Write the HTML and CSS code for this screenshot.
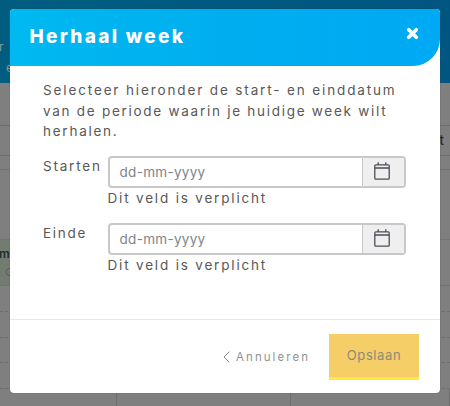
FILE: index.html
```html
<!DOCTYPE html>
<html lang="nl">
<head>
<meta charset="utf-8">
<title>Herhaal week</title>
<link rel="stylesheet" href="styles.css">
</head>
<body>
<div class="page">
  <div class="hero"><span class="hero-title">r</span><span class="hero-link">e</span></div>
  <div class="row toolbar"></div>
  <div class="row days"><span>t</span></div>
  <div class="row strip"></div>
  <div class="row slot"></div>
  <div class="row event"><span class="event-name">m</span><span class="event-icon">○</span></div>
  <div class="row dashed"></div>
  <div class="row dashed"></div>
  <div class="row dashed"></div>
  <div class="row dashed"></div>
  <div class="columns"><i></i><i></i><i></i></div>
</div>
<div class="overlay">
  <section class="modal">
    <header class="modal-header">
      <h1>Herhaal week</h1>
      <svg class="close" viewBox="0 0 12 12"><path d="M2.5 2.5 9.5 9.5M9.5 2.5 2.5 9.5"/></svg>
    </header>
    <div class="modal-body">
      <p class="intro"><span class="line l1">Selecteer hieronder de start- en einddatum</span> <span class="line l2">van de periode waarin je huidige week wilt</span> <span class="line l3">herhalen.</span></p>
      <div class="field">
        <label class="starten">Starten</label>
        <div class="control">
          <div class="input"><span class="placeholder">dd-mm-yyyy</span>
            <span class="addon"><svg viewBox="0 0 16 18"><path d="M.8 3.8a1 1 0 0 1 1-1h12.4a1 1 0 0 1 1 1v12.4a1 1 0 0 1-1 1H1.8a1 1 0 0 1-1-1zM.8 6h14.4M4.2 .3v2.5M11.8 .3v2.5"/></svg></span>
          </div>
          <div class="error">Dit veld is verplicht</div>
        </div>
      </div>
      <div class="field">
        <label class="einde">Einde</label>
        <div class="control">
          <div class="input"><span class="placeholder">dd-mm-yyyy</span>
            <span class="addon"><svg viewBox="0 0 16 18"><path d="M.8 3.8a1 1 0 0 1 1-1h12.4a1 1 0 0 1 1 1v12.4a1 1 0 0 1-1 1H1.8a1 1 0 0 1-1-1zM.8 6h14.4M4.2 .3v2.5M11.8 .3v2.5"/></svg></span>
          </div>
          <div class="error">Dit veld is verplicht</div>
        </div>
      </div>
    </div>
    <footer class="modal-footer">
      <span class="cancel"><svg viewBox="0 0 7 12"><path d="M6.3 .7 1 6l5.3 5.3"/></svg><span>Annuleren</span></span>
      <span class="save">Opslaan</span>
    </footer>
  </section>
</div>
</body>
</html>
```
FILE: styles.css
```css
* { box-sizing: border-box; }
body { margin: 0; font-family: Inter, "Liberation Sans", sans-serif; color: #585858; }
svg { display: block; fill: none; }

.page { position: relative; width: 450px; height: 406px; overflow: hidden; background: #7f7f7f; }
.hero { height: 83px; background: linear-gradient(90deg, #005d80, #005680); color: #8c999e; display: flex; flex-direction: column; padding-top: 40px; font-size: 12px; line-height: 14px; }
.hero-title { margin-left: -1px; }
.hero-link { margin: 7px 0 0 6px; }
.row { border-bottom: 1px solid #6d6d6d; }
.toolbar { height: 43px; }
.days { height: 30px; padding: 7px 6px 0 0; text-align: right; font-size: 13px; line-height: 14px; font-weight: 500; color: #262b30; }
.strip { height: 14px; border-color: #747474; }
.slot { height: 70px; border-color: #747474; }
.event { height: 46px; border-color: #747474; background: linear-gradient(90deg, #737c70 20px, transparent 20px); display: flex; flex-direction: column; padding-top: 6px; line-height: 16px; }
.event-name { font-size: 12px; font-weight: 600; color: #26292c; margin-left: -1px; }
.event-icon { font-size: 10px; line-height: 20px; margin-left: 5px; }
.dashed { height: 25.8px; border-bottom: 1px dashed #6f6f6f; }
.columns { position: absolute; inset: 389px 0 0; display: grid; grid-template-columns: 117px 174px 1fr; }
.columns i { border-right: 1px solid #6f6f6f; }

.overlay { position: absolute; top: 0; left: 0; width: 450px; height: 406px; padding: 9px 10px 13px 9.5px; }
.modal { height: 384px; background: #fff; border-radius: 4px; display: flex; flex-direction: column; overflow: hidden; box-shadow: 0 0 1px #444; }
.modal-header { height: 56.5px; flex: none; display: flex; justify-content: space-between; align-items: flex-start; padding: 16px 21px 0 20px; color: #fff; background: linear-gradient(90deg, #00b9f1, #00aeef 50%, #00a9f4); border-bottom-right-radius: 27px; }
h1 { margin: 0; font-size: 19px; line-height: 23px; font-weight: 800; letter-spacing: 2.3px; white-space: nowrap; }
.close { width: 13px; height: 13px; margin-top: 2px; stroke: #fff; stroke-width: 3.4; stroke-linecap: round; }

.modal-body { flex: 1; padding: 14.5px 34px 0 33.5px; font-size: 13.5px; }
.intro { margin: 0 0 14px; line-height: 20.5px; }
.line { display: block; white-space: nowrap; }
.l1 { letter-spacing: 1.87px; }
.l2 { letter-spacing: 1.73px; }
.l3 { letter-spacing: 1.75px; }
.field { display: grid; grid-template-columns: 64.5px 1fr; height: 67px; }
label { line-height: 20px; white-space: nowrap; }
.starten { letter-spacing: 1.8px; }
.einde { letter-spacing: 1.7px; }
.input { height: 32.5px; border: 2px solid #c8c8c8; border-radius: 4px; display: flex; justify-content: space-between; align-items: center; }
.placeholder { padding-left: 10px; color: #7e858b; font-size: 13.5px; letter-spacing: .3px; }
.addon { width: 42.5px; height: 100%; background: #efefef; border-left: 1px solid #c8c8c8; padding: 4px 0 0 11px; }
.addon svg { width: 16px; height: 18px; stroke: #4c4c58; stroke-width: 1.3; }
.error { line-height: 20px; white-space: nowrap; letter-spacing: 1.82px; }

.modal-footer { height: 74px; flex: none; border-top: 1px solid #e8e8e8; display: flex; justify-content: flex-end; align-items: flex-start; padding: 14px 21px 0 0; }
.cancel { display: flex; align-items: center; height: 45px; margin-right: 19px; color: #929292; font-size: 11.5px; letter-spacing: 2.05px; gap: 6px; }
.cancel svg { width: 7px; height: 12px; stroke: #888; stroke-width: 1; }
.save { width: 90px; height: 46px; background: #f5ce67; border-bottom: 3px solid #ffe841; color: #8e8a7b; text-align: center; font-size: 13px; line-height: 43px; letter-spacing: .6px; }
```
